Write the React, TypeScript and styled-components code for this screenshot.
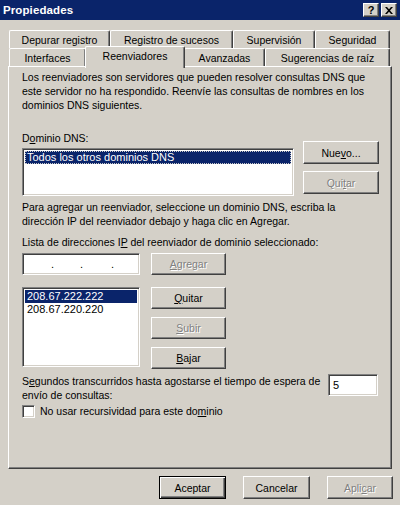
import React from 'react';
import styled, { createGlobalStyle, css } from 'styled-components';

const FONT = `"Liberation Sans", Arial, sans-serif`;

const GlobalStyle = createGlobalStyle`
  html, body { margin: 0; padding: 0; background: #d4d0c8; }
  body { width: 400px; height: 505px; overflow: hidden; font-family: ${FONT}; }
`;

const raised = css`
  border: 1px solid;
  border-color: #ffffff #404040 #404040 #ffffff;
  box-shadow: inset -1px -1px #808080, inset 1px 1px #d4d0c8;
`;

const sunken = css`
  border: 1px solid;
  border-color: #808080 #ffffff #ffffff #808080;
  box-shadow: inset 1px 1px #404040, inset -1px -1px #d4d0c8;
`;

const Window = styled.div`
  width: 400px;
  height: 505px;
  background: #d4d0c8;
  display: flex;
  flex-direction: column;
  color: #000;
  font-family: ${FONT};
  font-size: 10.5px;
`;

const TitleBar = styled.div`
  height: 20px;
  background: #0a246a;
  display: flex;
  align-items: center;
  justify-content: space-between;
  padding: 0 3px 0 3px;
`;

const Title = styled.span`
  color: #fff;
  font-weight: bold;
  font-size: 11.5px;
  letter-spacing: 0.1px;
`;

const CaptionButtons = styled.div`
  display: flex;
  gap: 2px;
`;

const CaptionButton = styled.div`
  width: 16px;
  height: 14px;
  box-sizing: border-box;
  background: #d4d0c8;
  ${raised};
  display: flex;
  align-items: center;
  justify-content: center;
  font-weight: bold;
  font-size: 11px;
  line-height: 1;
  color: #000;
`;

const Tabs = styled.div`
  margin-top: 10px;
  display: flex;
  flex-direction: column;
`;

const TabRow = styled.div`
  display: flex;
  align-items: flex-end;
  height: 18px;
  padding-left: 9px;
`;

const Tab = styled.div<{ $w: number; $active?: boolean }>`
  width: ${(p) => p.$w}px;
  height: 18px;
  box-sizing: border-box;
  background: #d4d0c8;
  border-top: 1px solid #ffffff;
  border-left: 1px solid #ffffff;
  border-right: 1px solid #404040;
  box-shadow: inset -1px 0 #808080;
  border-radius: 2px 2px 0 0;
  display: flex;
  align-items: center;
  justify-content: center;
  font-size: 10.5px;
  white-space: nowrap;
  ${(p) =>
    p.$active &&
    css`
      height: 22px;
      margin-bottom: -2px;
      margin-left: -1px;
      margin-right: -1px;
      position: relative;
      z-index: 2;
      padding-bottom: 4px;
    `}
`;

const Panel = styled.div`
  margin: 0 8px;
  height: 403px;
  box-sizing: border-box;
  ${raised};
  padding: 0 13px 0 13px;
  display: flex;
  flex-direction: column;
`;

const Text = styled.div<{ $mt: number }>`
  margin-top: ${(p) => p.$mt}px;
  line-height: 14px;
  white-space: nowrap;
`;

const U = styled.span`
  text-decoration: underline;
  text-underline-offset: 1px;
`;

const SplitRow = styled.div<{ $mt: number; $left: number; $gap: number }>`
  margin-top: ${(p) => p.$mt}px;
  display: grid;
  grid-template-columns: ${(p) => p.$left}px auto;
  column-gap: ${(p) => p.$gap}px;
  align-items: start;
`;

const Column = styled.div<{ $pt?: number; $gap?: number }>`
  display: flex;
  flex-direction: column;
  padding-top: ${(p) => p.$pt ?? 0}px;
  gap: ${(p) => p.$gap ?? 0}px;
`;

const ListBox = styled.div<{ $h: number; $w?: number; $mt?: number }>`
  height: ${(p) => p.$h}px;
  ${(p) => (p.$w ? `width: ${p.$w}px;` : '')}
  margin-top: ${(p) => p.$mt ?? 0}px;
  box-sizing: border-box;
  background: #fff;
  ${sunken};
  padding: 2px;
  display: flex;
  flex-direction: column;
  flex-shrink: 0;
`;

const ListItem = styled.div<{ $selected?: boolean; $focus?: boolean }>`
  height: 13px;
  line-height: 13px;
  padding-left: 2px;
  white-space: nowrap;
  font-size: 11px;
  ${(p) =>
    p.$selected &&
    css`
      background: #0a246a;
      color: #fff;
    `}
  ${(p) =>
    p.$focus &&
    css`
      outline: 1px dotted #c8c8c8;
      outline-offset: -1px;
    `}
`;

const Button = styled.div<{ $w: number; $h?: number; $disabled?: boolean; $default?: boolean }>`
  width: ${(p) => p.$w}px;
  height: ${(p) => p.$h ?? 23}px;
  box-sizing: border-box;
  background: #d4d0c8;
  ${raised};
  display: flex;
  align-items: center;
  justify-content: center;
  font-size: 10.5px;
  white-space: nowrap;
  ${(p) =>
    p.$disabled &&
    css`
      color: #808080;
      text-shadow: 1px 1px 0 #ffffff;
    `}
  ${(p) =>
    p.$default &&
    css`
      border: 1px solid #000;
      box-shadow: inset 1px 1px #ffffff, inset -1px -1px #404040, inset -2px -2px #808080;
    `}
`;

const InlineRow = styled.div<{ $mt: number; $gap: number }>`
  margin-top: ${(p) => p.$mt}px;
  display: flex;
  align-items: flex-start;
  gap: ${(p) => p.$gap}px;
`;

const IpField = styled.div`
  width: 118px;
  height: 22px;
  box-sizing: border-box;
  background: #fff;
  ${sunken};
  display: grid;
  grid-template-columns: 32px 29px 31px 1fr;
  align-items: center;
  font-size: 11px;
`;

const IpDot = styled.span`
  text-align: right;
  padding-right: 1px;
  line-height: 1;
`;

const TimeoutRow = styled.div`
  margin-top: 5px;
  display: flex;
  justify-content: space-between;
  align-items: flex-start;
`;

const NumberField = styled.div`
  width: 50px;
  height: 22px;
  box-sizing: border-box;
  background: #fff;
  ${sunken};
  padding: 0 4px;
  display: flex;
  align-items: center;
  font-size: 11px;
`;

const CheckRow = styled.label`
  margin-top: 2px;
  display: flex;
  align-items: center;
  gap: 5px;
  height: 14px;
`;

const CheckBox = styled.span`
  width: 13px;
  height: 13px;
  box-sizing: border-box;
  background: #fff;
  ${sunken};
`;

const Footer = styled.div`
  margin-top: 7px;
  display: flex;
  justify-content: flex-end;
  gap: 17px;
  padding-right: 7px;
`;

export default function App() {
  return (
    <>
      <GlobalStyle />
      <Window>
        <TitleBar>
          <Title>Propiedades</Title>
          <CaptionButtons>
            <CaptionButton>?</CaptionButton>
            <CaptionButton>
              <svg width="8" height="7" viewBox="0 0 8 7">
                <path d="M0 0h2l2 2.3L6 0h2L5 3.5 8 7H6L4 4.7 2 7H0l3-3.5z" fill="#000" />
              </svg>
            </CaptionButton>
          </CaptionButtons>
        </TitleBar>

        <Tabs>
          <TabRow>
            <Tab $w={101}>Depurar registro</Tab>
            <Tab $w={123}>Registro de sucesos</Tab>
            <Tab $w={82}>Supervisión</Tab>
            <Tab $w={75}>Seguridad</Tab>
          </TabRow>
          <TabRow>
            <Tab $w={77}>Interfaces</Tab>
            <Tab $w={100} $active>Reenviadores</Tab>
            <Tab $w={81}>Avanzadas</Tab>
            <Tab $w={125}>Sugerencias de raíz</Tab>
          </TabRow>
        </Tabs>

        <Panel>
          <Text $mt={3}>
            Los reenviadores son servidores que pueden resolver consultas DNS que
            <br />
            este servidor no ha respondido. Reenvíe las consultas de nombres en los
            <br />
            dominios DNS siguientes.
          </Text>

          <SplitRow $mt={19} $left={272} $gap={9}>
            <Column>
              <Text $mt={0}>
                D<U>o</U>minio DNS:
              </Text>
              <ListBox $h={48} $mt={3}>
                <ListItem $selected $focus>Todos los otros dominios DNS</ListItem>
              </ListBox>
            </Column>
            <Column $pt={10} $gap={7}>
              <Button $w={76}>
                Nue<U>v</U>o...
              </Button>
              <Button $w={76} $disabled>
                Qui<U>t</U>ar
              </Button>
            </Column>
          </SplitRow>

          <Text $mt={4}>
            Para agregar un reenviador, seleccione un dominio DNS, escriba la
            <br />
            dirección IP del reenviador debajo y haga clic en Agregar.
          </Text>

          <Text $mt={7}>
            Lista de direcciones I<U>P</U> del reenviador de dominio seleccionado:
          </Text>

          <InlineRow $mt={4} $gap={11}>
            <IpField>
              <IpDot>.</IpDot>
              <IpDot>.</IpDot>
              <IpDot>.</IpDot>
              <span />
            </IpField>
            <Button $w={75} $h={22} $disabled>
              <U>A</U>gregar
            </Button>
          </InlineRow>

          <InlineRow $mt={12} $gap={11}>
            <ListBox $h={80} $w={118}>
              <ListItem $selected>208.67.222.222</ListItem>
              <ListItem>208.67.220.220</ListItem>
            </ListBox>
            <Column $gap={8}>
              <Button $w={75} $h={22}>
                <U>Q</U>uitar
              </Button>
              <Button $w={75} $h={22} $disabled>
                <U>S</U>ubir
              </Button>
              <Button $w={75} $h={22}>
                <U>B</U>ajar
              </Button>
            </Column>
          </InlineRow>

          <TimeoutRow>
            <Text $mt={0}>
              S<U>e</U>gundos transcurridos hasta agostarse el tiempo de espera de
              <br />
              envío de consultas:
            </Text>
            <NumberField>5</NumberField>
          </TimeoutRow>

          <CheckRow>
            <CheckBox />
            <span>
              No usar recursividad para este do<U>m</U>inio
            </span>
          </CheckRow>
        </Panel>

        <Footer>
          <Button $w={67} $default>
            Aceptar
          </Button>
          <Button $w={67}>Cancelar</Button>
          <Button $w={66} $disabled>
            Apli<U>c</U>ar
          </Button>
        </Footer>
      </Window>
    </>
  );
}
